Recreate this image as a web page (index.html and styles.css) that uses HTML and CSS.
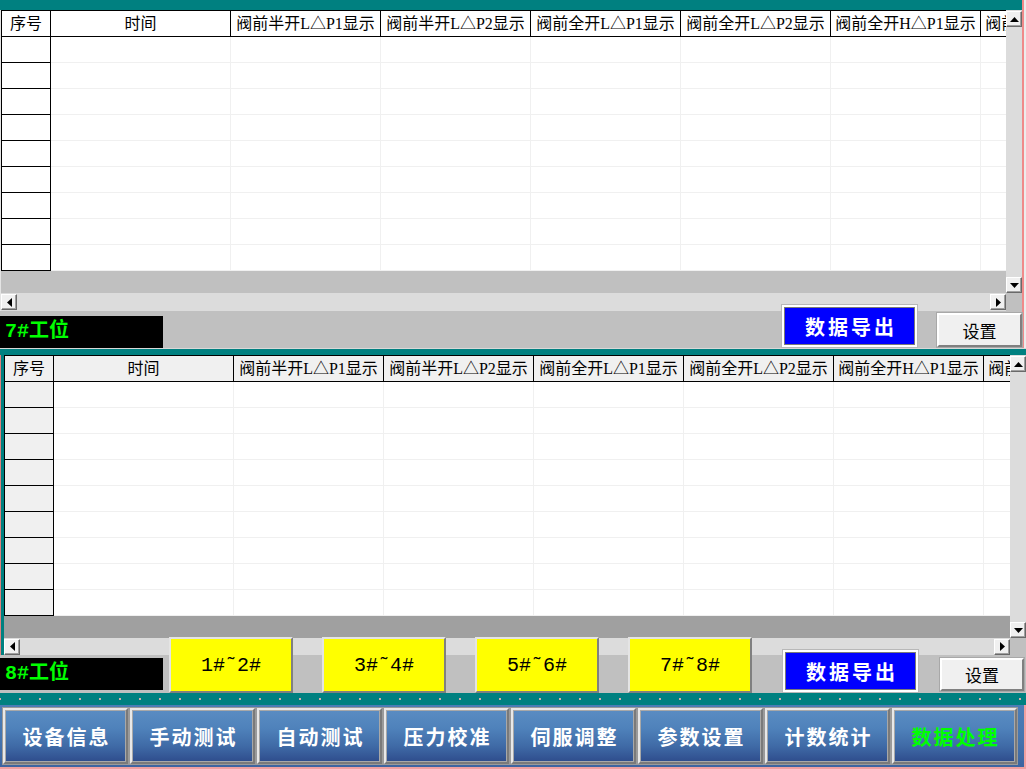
FILE: index.html
```html
<!DOCTYPE html>
<html lang="zh-CN">
<head>
<meta charset="utf-8">
<title>数据处理</title>
<link rel="stylesheet" href="styles.css">
</head>
<body>
<div class="screen">
  <section class="station station-top">
    <div class="band"></div>
    <div class="gridbox">
      <div class="viewport">
        <table class="sheet">
          <thead>
            <tr><th class="c-no">序号</th><th class="c-time">时间</th><th class="c-val">阀前半开L△P1显示</th><th class="c-val">阀前半开L△P2显示</th><th class="c-val">阀前全开L△P1显示</th><th class="c-val">阀前全开L△P2显示</th><th class="c-val">阀前全开H△P1显示</th><th class="c-val">阀前全开H△P2显示</th></tr>
          </thead>
          <tbody>
            <tr><td class="rh"></td><td></td><td></td><td></td><td></td><td></td><td></td><td></td></tr>
            <tr><td class="rh"></td><td></td><td></td><td></td><td></td><td></td><td></td><td></td></tr>
            <tr><td class="rh"></td><td></td><td></td><td></td><td></td><td></td><td></td><td></td></tr>
            <tr><td class="rh"></td><td></td><td></td><td></td><td></td><td></td><td></td><td></td></tr>
            <tr><td class="rh"></td><td></td><td></td><td></td><td></td><td></td><td></td><td></td></tr>
            <tr><td class="rh"></td><td></td><td></td><td></td><td></td><td></td><td></td><td></td></tr>
            <tr><td class="rh"></td><td></td><td></td><td></td><td></td><td></td><td></td><td></td></tr>
            <tr><td class="rh"></td><td></td><td></td><td></td><td></td><td></td><td></td><td></td></tr>
            <tr><td class="rh"></td><td></td><td></td><td></td><td></td><td></td><td></td><td></td></tr>
          </tbody>
        </table>
      </div>
      <div class="vscroll">
        <span class="sb-btn"><svg width="9" height="5" viewBox="0 0 9 5"><polygon points="0,5 4.5,0 9,5" fill="#000"/></svg></span>
        <span class="sb-btn"><svg width="9" height="5" viewBox="0 0 9 5"><polygon points="0,0 9,0 4.5,5" fill="#000"/></svg></span>
      </div>
      <div class="hscroll">
        <span class="sb-btn"><svg width="5" height="9" viewBox="0 0 5 9"><polygon points="5,0 5,9 0,4.5" fill="#000"/></svg></span>
        <span class="sb-btn"><svg width="5" height="9" viewBox="0 0 5 9"><polygon points="0,0 5,4.5 0,9" fill="#000"/></svg></span>
      </div>
      <div class="corner"></div>
    </div>
    <div class="toolbar">
      <div class="station-label">7#工位</div>
      <button class="export">数据导出</button>
      <button class="settings">设置</button>
    </div>
  </section>

  <div class="divider"></div>

  <section class="station station-bottom">
    <div class="gridbox">
      <div class="viewport">
        <table class="sheet">
          <thead>
            <tr><th class="c-no">序号</th><th class="c-time">时间</th><th class="c-val">阀前半开L△P1显示</th><th class="c-val">阀前半开L△P2显示</th><th class="c-val">阀前全开L△P1显示</th><th class="c-val">阀前全开L△P2显示</th><th class="c-val">阀前全开H△P1显示</th><th class="c-val">阀前全开H△P2显示</th></tr>
          </thead>
          <tbody>
            <tr><td class="rh"></td><td></td><td></td><td></td><td></td><td></td><td></td><td></td></tr>
            <tr><td class="rh"></td><td></td><td></td><td></td><td></td><td></td><td></td><td></td></tr>
            <tr><td class="rh"></td><td></td><td></td><td></td><td></td><td></td><td></td><td></td></tr>
            <tr><td class="rh"></td><td></td><td></td><td></td><td></td><td></td><td></td><td></td></tr>
            <tr><td class="rh"></td><td></td><td></td><td></td><td></td><td></td><td></td><td></td></tr>
            <tr><td class="rh"></td><td></td><td></td><td></td><td></td><td></td><td></td><td></td></tr>
            <tr><td class="rh"></td><td></td><td></td><td></td><td></td><td></td><td></td><td></td></tr>
            <tr><td class="rh"></td><td></td><td></td><td></td><td></td><td></td><td></td><td></td></tr>
            <tr><td class="rh"></td><td></td><td></td><td></td><td></td><td></td><td></td><td></td></tr>
          </tbody>
        </table>
      </div>
      <div class="vscroll">
        <span class="sb-btn"><svg width="9" height="5" viewBox="0 0 9 5"><polygon points="0,5 4.5,0 9,5" fill="#000"/></svg></span>
        <span class="sb-btn"><svg width="9" height="5" viewBox="0 0 9 5"><polygon points="0,0 9,0 4.5,5" fill="#000"/></svg></span>
      </div>
      <div class="hscroll">
        <span class="sb-btn"><svg width="5" height="9" viewBox="0 0 5 9"><polygon points="5,0 5,9 0,4.5" fill="#000"/></svg></span>
        <span class="sb-btn"><svg width="5" height="9" viewBox="0 0 5 9"><polygon points="0,0 5,4.5 0,9" fill="#000"/></svg></span>
      </div>
      <div class="corner"></div>
    </div>
    <div class="toolbar">
      <div class="station-label">8#工位</div>
      <button class="range first">1#˜2#</button>
      <button class="range">3#˜4#</button>
      <button class="range">5#˜6#</button>
      <button class="range">7#˜8#</button>
      <button class="export">数据导出</button>
      <button class="settings">设置</button>
    </div>
  </section>

  <div class="dotstrip"></div>

  <nav class="menu">
    <button class="menu-btn">设备信息</button>
    <button class="menu-btn">手动测试</button>
    <button class="menu-btn">自动测试</button>
    <button class="menu-btn">压力校准</button>
    <button class="menu-btn">伺服调整</button>
    <button class="menu-btn">参数设置</button>
    <button class="menu-btn">计数统计</button>
    <button class="menu-btn active">数据处理</button>
  </nav>
</div>
</body>
</html>
```

FILE: styles.css
```css
* { box-sizing: border-box; }
html, body { margin: 0; padding: 0; }
body {
  width: 1026px;
  height: 769px;
  overflow: hidden;
  background: #ececec;
  font-family: "Noto Sans CJK SC", sans-serif;
}
.screen {
  display: flex;
  flex-direction: column;
  width: 1026px;
  height: 769px;
}

/* ---------- station panels ---------- */
.station-top {
  width: 1024px;
  border-right: 2px solid #f08a8a;
  background: #c0c0c0;
}
.band {
  height: 10px;
  background: #008080;
}
.gridbox {
  display: grid;
}
.station-top .gridbox {
  grid-template-columns: 1005px 16px;
  grid-template-rows: 283px 18px;
  padding-left: 1px;
  background: #e4e4e4;
}
.station-bottom .gridbox {
  grid-template-columns: 1006px 16px;
  grid-template-rows: 283px 17px;
  border-left: 1px solid #e08080;
  padding-left: 3px;
  background: #008080;
}
.viewport {
  overflow: hidden;
}
.station-top .viewport { background: #c0c0c0; }
.station-bottom .viewport { background: #a0a0a0; }

/* ---------- sheet ---------- */
.sheet {
  border-collapse: separate;
  border-spacing: 0;
  table-layout: fixed;
  width: 1130px;
  border-top: 1px solid #000;
  border-left: 1px solid #000;
  background: #fff;
}
.sheet th,
.sheet td {
  padding: 0;
  height: 26px;
  border-right: 1px solid #f0f0f0;
  border-bottom: 1px solid #f0f0f0;
}
.sheet th {
  border-color: #000;
  font-family: "Liberation Serif", "Noto Sans CJK SC", serif;
  font-weight: 400;
  font-size: 16px;
  line-height: 25px;
  color: #000;
  white-space: nowrap;
  overflow: hidden;
  text-align: center;
  background: #fff;
}
.sheet td.rh { border-color: #000; }
.station-bottom .sheet th,
.station-bottom .sheet td.rh { background: #f0f0f0; }
.c-no { width: 49px; }
.c-time { width: 180px; }
.c-val { width: 150px; }

/* ---------- scrollbars ---------- */
.vscroll {
  display: flex;
  flex-direction: column;
  justify-content: space-between;
  background: #dcdcdc;
  padding-top: 1px;
}
.hscroll {
  display: flex;
  justify-content: space-between;
  align-items: center;
  background: #dcdcdc;
}
.corner { background: #c0c0c0; }
.sb-btn {
  display: flex;
  align-items: center;
  justify-content: center;
  width: 16px;
  height: 16px;
  background: #f0f0f0;
  border: 1px solid;
  border-color: #fff #696969 #696969 #fff;
  box-shadow: inset -1px -1px 0 #a0a0a0;
}

/* ---------- toolbars ---------- */
.toolbar {
  display: flex;
  align-items: flex-start;
  background: #c0c0c0;
}
.station-top .toolbar { height: 37px; }
.station-bottom .toolbar { height: 38px; }
.station-label {
  width: 163px;
  height: 32px;
  padding-left: 5px;
  background: #000;
  color: #00ff00;
  font-family: "Liberation Mono", "Noto Sans CJK SC", monospace;
  font-weight: 700;
  font-size: 20px;
  line-height: 32px;
  white-space: nowrap;
}
.station-top .station-label { margin-top: 5px; }
.station-bottom .station-label { margin-top: 3px; }

button {
  padding: 0;
  margin: 0;
  cursor: default;
}
.export {
  width: 135px;
  height: 42px;
  background: #0000ff;
  color: #fff;
  font-family: "Noto Sans CJK SC", sans-serif;
  font-weight: 700;
  font-size: 20px;
  letter-spacing: 3px;
  text-indent: 3px;
  border: 2px solid #fff;
  box-shadow: inset 0 0 0 1px #7a7a7a, 0 0 0 1px #b8b8b8;
}
.station-top .export { margin-left: auto; margin-top: -6px; }
.station-bottom .export { margin-left: 31px; margin-top: -5px; }

.settings {
  background: #f0f0f0;
  color: #000;
  font-family: "Noto Sans CJK SC", sans-serif;
  font-size: 17px;
  border: 2px solid;
  border-color: #fff #808080 #808080 #fff;
  box-shadow: 0 0 0 1px #a8a8a8;
}
.station-top .settings { width: 85px; height: 34px; margin-left: 20px; margin-top: 2px; }
.station-bottom .settings { width: 84px; height: 33px; margin-left: 22px; margin-top: 3px; }

.range {
  width: 124px;
  height: 56px;
  margin-top: -18px;
  margin-left: 29px;
  background: #ffff00;
  color: #000;
  font-family: "Liberation Mono", monospace;
  font-size: 20px;
  border: 2px solid;
  border-color: #e4e4e4 #808080 #808080 #e4e4e4;
}
.range.first { margin-left: 6px; }

.divider {
  height: 7px;
  border-top: 1px solid #d8d8d8;
  background: #008080;
}

/* ---------- bottom navigation ---------- */
.dotstrip {
  height: 12px;
  background-color: #008080;
  background-image: radial-gradient(circle, #d8a8a8 0.8px, transparent 1.1px);
  background-size: 20px 12px;
  background-position: 10px 0;
}
.menu {
  display: flex;
  align-items: flex-start;
  gap: 2px;
  height: 64px;
  padding: 3px 0 0 3px;
  background: linear-gradient(180deg, #4c7db6 0%, #4676b0 50%, #3d64a0 100%);
  border-bottom: 2px solid #f0a0a0;
  border-right: 2px solid #f0a0a0;
}
.menu-btn {
  width: 125px;
  height: 56px;
  color: #fff;
  font-family: "Noto Sans CJK SC", sans-serif;
  font-weight: 700;
  font-size: 20px;
  letter-spacing: 2px;
  text-indent: 2px;
  border: 2px solid;
  border-color: #e8e8e8 #7a7a7a #7a7a7a #e8e8e8;
  box-shadow: inset 0 0 0 1px #a8a8a8, 0 0 0 1px #9a9a9a;
  background: linear-gradient(180deg, #5a8cc2 0%, #4f82bb 35%, #3f6aa6 70%, #2e4c8c 100%);
}
.menu-btn.active { color: #00ff00; }
```
